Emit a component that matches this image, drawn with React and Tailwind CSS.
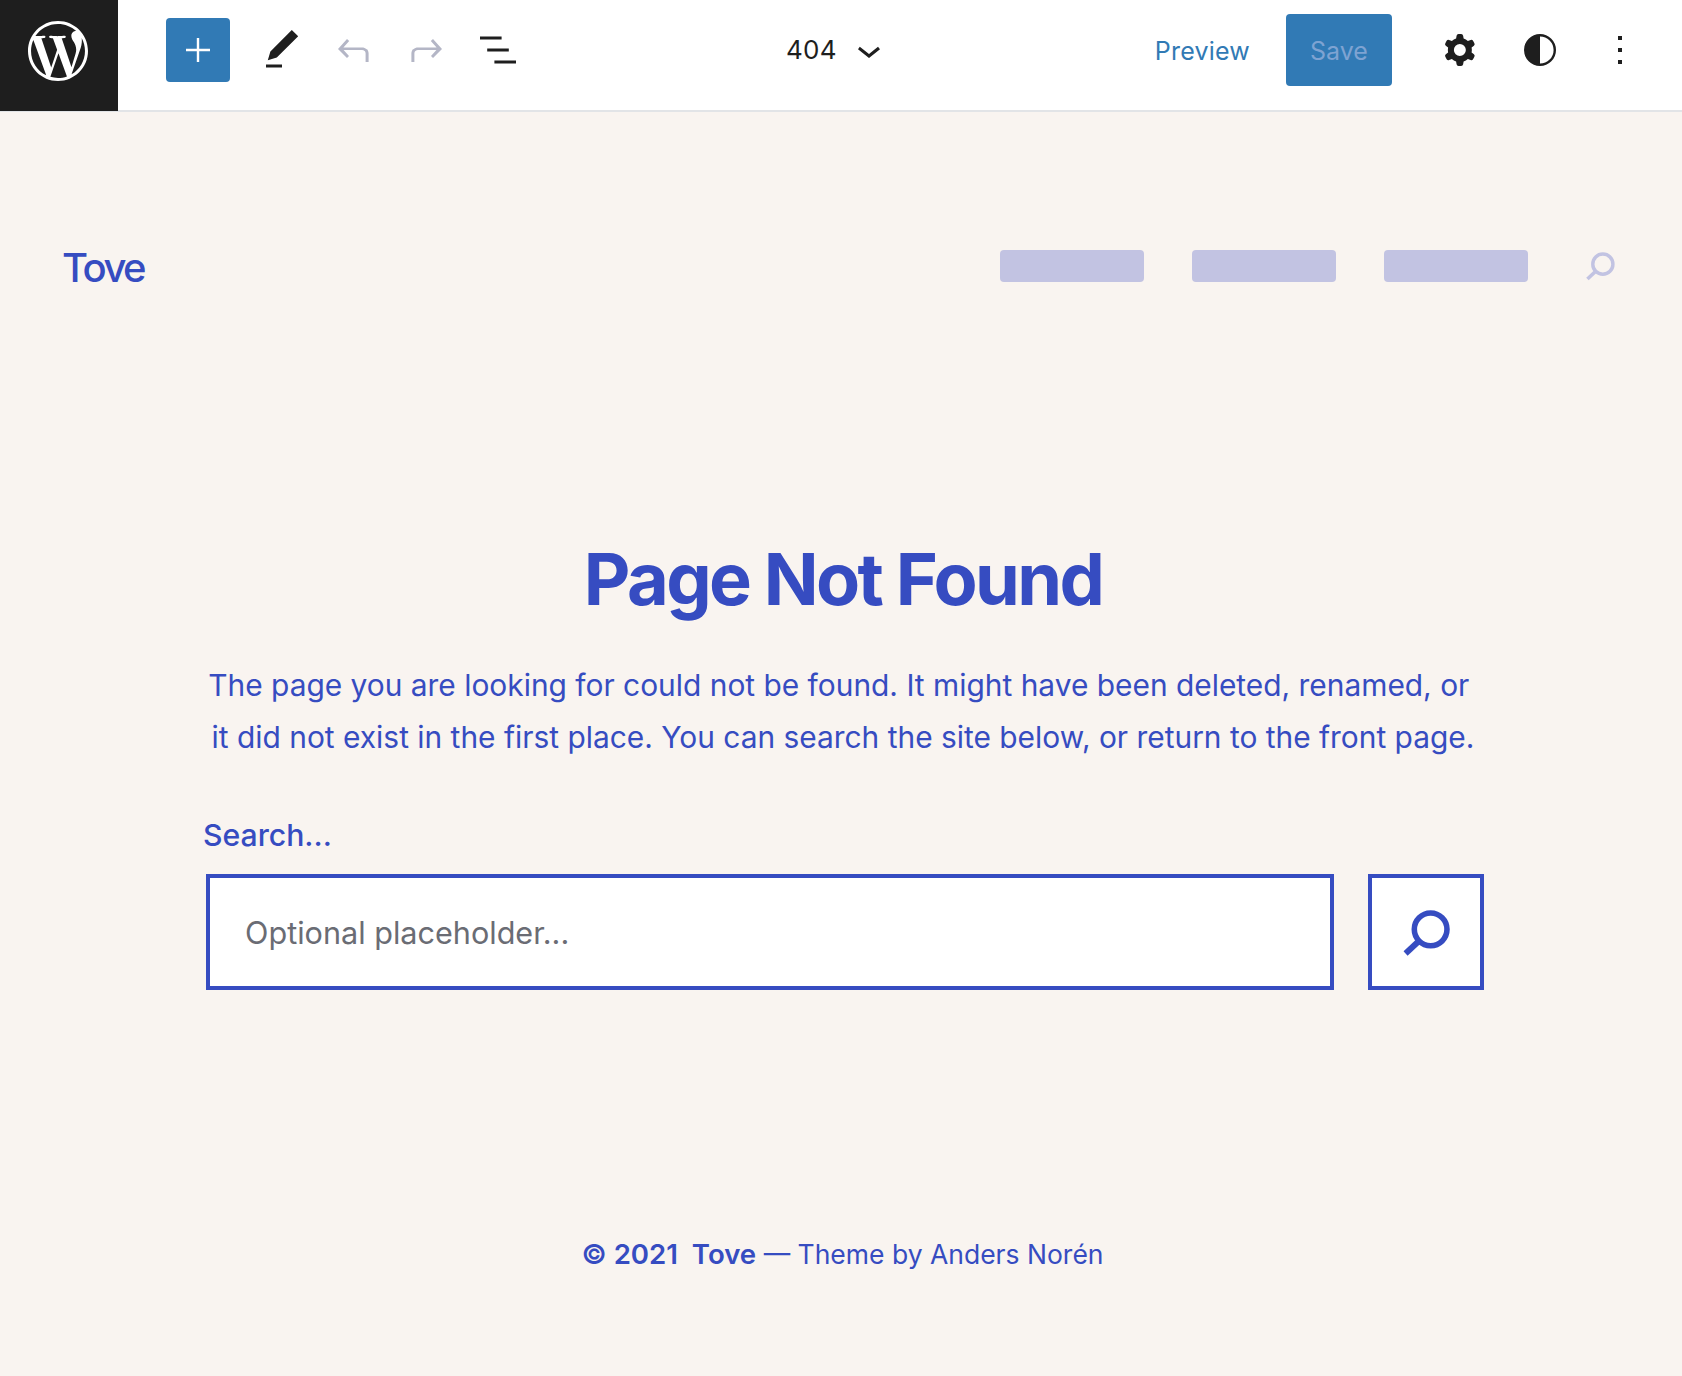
import { SiWordpress } from "react-icons/si";

const inter = "font-['Inter',sans-serif]";

function Icon({ d, className = "", flip = false, evenodd = false }) {
  return (
    <svg viewBox="0 0 24 24" className={`w-12 h-12 fill-current shrink-0 ${flip ? "-scale-x-100" : ""} ${className}`}>
      <path d={d} fillRule={evenodd ? "evenodd" : "nonzero"} clipRule={evenodd ? "evenodd" : "nonzero"} />
    </svg>
  );
}

function SearchGlyph({ className = "" }) {
  return (
    <svg viewBox="0 0 28 28" fill="none" stroke="currentColor" className={className}>
      <circle cx="16.5" cy="11.5" r="8.8" strokeWidth="3" />
      <path d="M10.5 17.5 3 24.5" strokeWidth="3.2" />
    </svg>
  );
}

const paths = {
  plus: "M18 11.4h-5.4V6h-1.2v5.4H6v1.2h5.4V18h1.2v-5.4H18z",
  pencil: "M20.1 5.1L16.9 2 6.2 12.7l-1.3 4.4 4.5-1.3L20.1 5.1zM4 20.8h8v-1.5H4v1.5z",
  undo: "M18.3 11.7c-.6-.6-1.4-.9-2.3-.9H6.7l2.9-3.3-1.1-1-4.5 5L8.5 16l1-1-2.7-3h9.2c.5 0 .9.2 1.3.5.4.3.5.8.5 1.3v4.2h1.5v-4.2c0-.9-.3-1.7-1-2.4z",
  list: "M13.8 5.2H3v1.5h10.8V5.2zm-3.6 12v1.5H21v-1.5H10.2zm7.2-6H6.6v1.5h10.8v-1.5z",
  chevron: "M17.5 11.6L12 16l-5.5-4.4.9-1.2L12 14l4.5-3.6 1 1.2z",
  cog: "M10.289 4.836A1 1 0 0111.275 4h1.306a1 1 0 01.987.836l.244 1.466c.787.26 1.503.679 2.108 1.218l1.393-.522a1 1 0 011.216.437l.653 1.13a1 1 0 01-.23 1.273l-1.148.944a6.025 6.025 0 010 2.435l1.149.946a1 1 0 01.23 1.272l-.653 1.13a1 1 0 01-1.216.437l-1.394-.522c-.605.54-1.32.958-2.108 1.218l-.244 1.466a1 1 0 01-.987.836h-1.306a1 1 0 01-.986-.836l-.244-1.466a5.995 5.995 0 01-2.108-1.218l-1.394.522a1 1 0 01-1.217-.436l-.653-1.131a1 1 0 01.23-1.272l1.149-.946a6.026 6.026 0 010-2.435l-1.148-.944a1 1 0 01-.23-1.272l.653-1.131a1 1 0 011.217-.437l1.393.522a5.994 5.994 0 012.108-1.218l.244-1.466zM14.929 12a3 3 0 11-6 0 3 3 0 016 0z",
  more: "M13 19h-2v-2h2v2zm0-6h-2v-2h2v2zm0-6h-2V5h2v2z",
};

function TopBar() {
  return (
    <header className="flex items-center h-[112px] bg-white border-b-2 border-[#e2e4e7] text-[#1e1e1e]">
      <div className="flex items-center justify-center w-[118px] h-[112px] pb-2 pr-[2px] bg-[#1e1e1e] text-white">
        <SiWordpress className="w-[60px] h-[60px]" />
      </div>
      <div className="flex items-center flex-1 pb-[10px]">
        <div className="flex items-center ml-12">
          <button className="flex items-center justify-center w-16 h-16 rounded bg-[#317ab5] text-white">
            <Icon d={paths.plus} />
          </button>
          <div className="flex items-center gap-6 ml-[28px]">
            <Icon d={paths.pencil} />
            <Icon d={paths.undo} className="text-[#b4b6c6]" />
            <Icon d={paths.undo} flip className="text-[#b4b6c6]" />
            <Icon d={paths.list} />
          </div>
        </div>
        <div className="flex items-center ml-[264px] text-[26px] tracking-[0.3px]">
          <span className="mb-[2px]">404</span>
          <Icon d={paths.chevron} className="ml-2" />
        </div>
        <div className="flex items-center ml-auto mr-[38px]">
          <span className="mt-1 text-[25px] tracking-[0.2px] text-[#317ab5]">Preview</span>
          <button className="flex items-center justify-center w-[106px] h-[72px] pt-1 ml-9 rounded bg-[#317ab5] text-[25px] text-[#7ea3d2]">
            Save
          </button>
          <div className="flex items-center gap-8 ml-11">
            <Icon d={paths.cog} evenodd />
            <svg viewBox="0 0 24 24" className="w-12 h-12 fill-current">
              <path d="M12 4a8 8 0 1 0 0 16 8 8 0 0 0 0-16zm0 14.8V5.2a6.8 6.8 0 0 1 0 13.6z" />
            </svg>
            <Icon d={paths.more} />
          </div>
        </div>
      </div>
    </header>
  );
}

export default function App() {
  return (
    <div className={`flex flex-col h-[1376px] bg-[#f9f4f0] text-[#364cc1] ${inter}`}>
      <TopBar />
      <div className="flex items-center justify-between pl-[62px] pr-[66px] mt-[128px]">
        <div className="mt-1 text-[40px] leading-[48px] font-medium tracking-[-2.5px]">Tove</div>
        <nav className="flex items-center gap-12">
          <div className="w-36 h-8 rounded bg-[#c2c3e2]" />
          <div className="w-36 h-8 rounded bg-[#c2c3e2]" />
          <div className="w-36 h-8 rounded bg-[#c2c3e2] mr-2" />
          <SearchGlyph className="w-8 h-8 mt-[2px] text-[#c2c3e2]" />
        </nav>
      </div>
      <main className="flex flex-col items-center mt-[245px] pl-1">
        <h1 className="text-[72px] leading-[84px] font-bold tracking-[-2.6px]">Page Not Found</h1>
        <p className="mt-[38px] text-[29.9px] leading-[52px] text-center">
          The page you are looking for could not be found. It might have been deleted, renamed, or&nbsp;
          <br />
          it did not exist in the first place. You can search the site below, or return to the front page.
        </p>
        <div className="w-[1282px] mt-[52px]">
          <div className="ml-[1px] text-[30.2px] leading-[40px] font-medium">Search...</div>
          <div className="flex gap-[34px] mt-[19px] ml-1">
            <div className="flex items-center flex-1 h-[116px] pl-[35px] pt-[2px] bg-white border-4 border-[#364cc1] text-[30.6px] text-[#6a6c74]">
              Optional placeholder...
            </div>
            <button className="flex items-center justify-center w-[116px] h-[116px] bg-white border-4 border-[#364cc1]">
              <SearchGlyph className="w-[52px] h-[52px] mt-1" />
            </button>
          </div>
        </div>
      </main>
      <footer className="mt-[244px] text-center text-[26.5px] leading-[40px] pl-[3px]">
        <span className="font-semibold text-[27.6px]">© 2021 &nbsp;Tove</span> — Theme by Anders Norén
      </footer>
    </div>
  );
}
